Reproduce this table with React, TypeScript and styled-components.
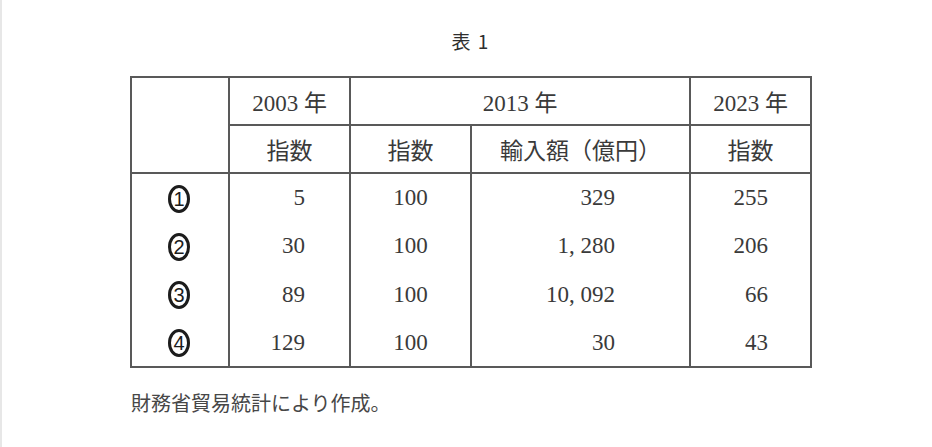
import React from "react";
import styled, { createGlobalStyle } from "styled-components";

const GlobalStyle = createGlobalStyle`
  html, body {
    margin: 0;
    padding: 0;
    background: #ffffff;
  }
`;

const LINE = "#595959";

// page with a faint scan edge on the left
const Page = styled.div`
  box-sizing: border-box;
  width: 932px;
  height: 447px;
  border-left: 2px solid #e7e7e7;
  padding: 31px 0 0 128px;
  color: #333333;
`;

const Sheet = styled.div`
  width: 680px;
  display: flex;
  flex-direction: column;
`;

const Title = styled.h2`
  margin: 0 0 25px;
  height: 20px;
  line-height: 20px;
  text-align: center;
  font-family: "Noto Sans CJK JP", "Liberation Sans", sans-serif;
  font-size: 19px;
  font-weight: 400;
  word-spacing: 3px;
  color: #2e2e2e;
`;

const Table = styled.table`
  border-collapse: collapse;
  table-layout: fixed;
  width: 680px;
  border: 2px solid ${LINE};
  font-family: "Liberation Serif", "Noto Sans CJK JP", serif;
  font-size: 23px;
  color: #3a3a3a;
`;

const HeadRow = styled.tr`
  height: 48px;
`;

const BodyRow = styled.tr`
  height: 48.5px;
`;

const HeadCell = styled.th`
  border: 2px solid ${LINE};
  padding: 0;
  font-weight: 400;
  text-align: center;
  vertical-align: middle;
`;

const Cell = styled.td<{ $right?: number }>`
  border-left: 2px solid ${LINE};
  border-right: 2px solid ${LINE};
  padding: 0 ${(p) => p.$right ?? 0}px 0 0;
  text-align: ${(p) => (p.$right !== undefined ? "right" : "center")};
  vertical-align: middle;
  line-height: 1;
`;

// oval row marker, as printed in the source table
const Marker = styled.span`
  box-sizing: border-box;
  display: inline-flex;
  align-items: center;
  justify-content: center;
  width: 22px;
  height: 28px;
  margin: 2px 2px 0 0;
  border: 3px solid #1c1c1c;
  border-radius: 50%;
  font-family: "Liberation Sans", "DejaVu Sans", sans-serif;
  font-size: 20px;
  line-height: 1;
  color: #1c1c1c;
  vertical-align: middle;
`;

const Comma = styled.span`
  margin-right: 0.25em;
`;

const Note = styled.p`
  margin: 23px 0 0;
  font-family: "Noto Sans CJK JP", sans-serif;
  font-size: 20px;
  line-height: 24px;
  color: #474747;
  padding-left: 1px;
`;

type Row = {
  mark: string;
  num: number;
  idx2003: string;
  idx2013: string;
  amount: string;
  idx2023: string;
};

const rows: Row[] = [
  { mark: "①", num: 1, idx2003: "5", idx2013: "100", amount: "329", idx2023: "255" },
  { mark: "②", num: 2, idx2003: "30", idx2013: "100", amount: "1,280", idx2023: "206" },
  { mark: "③", num: 3, idx2003: "89", idx2013: "100", amount: "10,092", idx2023: "66" },
  { mark: "④", num: 4, idx2003: "129", idx2013: "100", amount: "30", idx2023: "43" },
];

// draws the comma with the wide spacing of the printed table
const Amount: React.FC<{ value: string }> = ({ value }) => {
  const parts = value.split(",");
  return (
    <>
      {parts.map((part, i) => (
        <React.Fragment key={i}>
          {part}
          {i < parts.length - 1 && <Comma>,</Comma>}
        </React.Fragment>
      ))}
    </>
  );
};

const App: React.FC = () => {
  return (
    <Page>
      <GlobalStyle />
      <Sheet>
        <Title>表 1</Title>
        <Table>
          <colgroup>
            <col style={{ width: 98 }} />
            <col style={{ width: 121 }} />
            <col style={{ width: 121 }} />
            <col style={{ width: 219 }} />
            <col style={{ width: 121 }} />
          </colgroup>
          <thead>
            <HeadRow>
              <HeadCell rowSpan={2} />
              <HeadCell>2003 年</HeadCell>
              <HeadCell colSpan={2}>2013 年</HeadCell>
              <HeadCell>2023 年</HeadCell>
            </HeadRow>
            <HeadRow>
              <HeadCell>指数</HeadCell>
              <HeadCell>指数</HeadCell>
              <HeadCell>輸入額（億円）</HeadCell>
              <HeadCell>指数</HeadCell>
            </HeadRow>
          </thead>
          <tbody>
            {rows.map((r) => (
              <BodyRow key={r.mark}>
                <Cell>
                  <Marker aria-label={r.mark}>{r.num}</Marker>
                </Cell>
                <Cell $right={44}>{r.idx2003}</Cell>
                <Cell>{r.idx2013}</Cell>
                <Cell $right={74}>
                  <Amount value={r.amount} />
                </Cell>
                <Cell $right={42}>{r.idx2023}</Cell>
              </BodyRow>
            ))}
          </tbody>
        </Table>
        <Note>財務省貿易統計により作成。</Note>
      </Sheet>
    </Page>
  );
};

export default App;
